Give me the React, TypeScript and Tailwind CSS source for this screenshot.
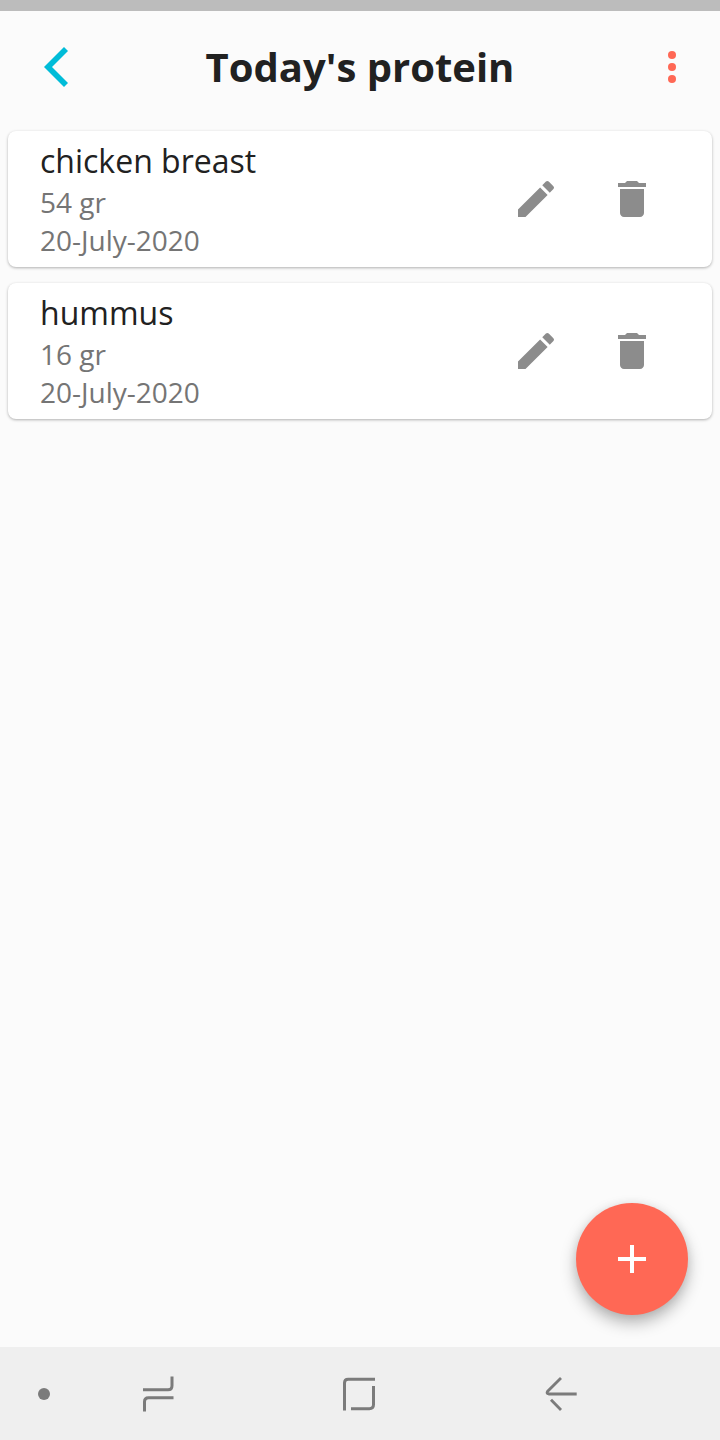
const foods = [
  { name: 'chicken breast', amount: '54 gr', date: '20-July-2020' },
  { name: 'hummus', amount: '16 gr', date: '20-July-2020' },
];

function MaterialIcon({ d, className }: { d: string; className: string }) {
  return (
    <svg viewBox="0 0 24 24" className={className} fill="currentColor">
      <path d={d} />
    </svg>
  );
}

const EDIT = 'M3 17.25V21h3.75L17.81 9.94l-3.75-3.75L3 17.25zM20.71 7.04a1 1 0 0 0 0-1.41l-2.34-2.34a1 1 0 0 0-1.41 0l-1.83 1.83 3.75 3.75 1.83-1.83z';
const TRASH = 'M6 19c0 1.1.9 2 2 2h8c1.1 0 2-.9 2-2V7H6v12zM19 4h-3.5l-1-1h-5l-1 1H5v2h14V4z';

export default function App() {
  return (
    <div className="relative flex h-[1440px] w-[720px] flex-col bg-[#fbfbfb] font-['Open_Sans',sans-serif]">
      <div className="h-[11px] bg-[#bcbcbc]" />
      <header className="flex h-28 items-center justify-between px-6">
        <button aria-label="Back" className="flex w-16 justify-center">
          <svg viewBox="0 0 24 40" className="h-10 w-6 text-[#00bcd8]" fill="currentColor">
            <path d="M20 0 0 20l20 20 4-4L8 20 24 4z" />
          </svg>
        </button>
        <h1 className="text-[40px] leading-none font-bold whitespace-nowrap text-[#212121]">Today's protein</h1>
        <button aria-label="More" className="flex w-16 justify-end">
          <svg viewBox="0 0 24 24" className="size-12 text-[#ff6855]" fill="currentColor">
            <circle cx="12" cy="6" r="2" />
            <circle cx="12" cy="12" r="2" />
            <circle cx="12" cy="18" r="2" />
          </svg>
        </button>
      </header>
      <main className="flex flex-1 flex-col gap-4 px-2 pt-2">
        {foods.map((f) => (
          <article key={f.name} className="flex h-[136px] items-center rounded-lg bg-white pr-14 pl-8 shadow-[0_1px_3px_rgba(0,0,0,0.3)]">
            <div className="flex-1 font-[370]">
              <h2 className="text-[32px] leading-[44px] font-[370] text-[#212121]">{f.name}</h2>
              <p className="text-[28px] leading-[38px] text-[#757575]">{f.amount}</p>
              <p className="text-[28px] leading-[38px] text-[#757575]">{f.date}</p>
            </div>
            <div className="flex gap-12 text-[#8c8c8c]">
              <MaterialIcon d={EDIT} className="size-12" />
              <MaterialIcon d={TRASH} className="size-12" />
            </div>
          </article>
        ))}
      </main>
      <button aria-label="Add" className="absolute top-[1203px] left-[576px] flex size-28 items-center justify-center rounded-full bg-[#ff6855] text-white shadow-[0_8px_16px_rgba(0,0,0,0.28),0_1px_10px_rgba(0,0,0,0.08)]">
        <MaterialIcon d="M19 13h-6v6h-2v-6H5v-2h6V5h2v6h6v2z" className="size-12" />
      </button>
      <nav className="h-[93px] bg-[#efefef]">
        <svg viewBox="0 1347 720 93" className="h-[93px] w-[720px]" fill="none" stroke="#7b7b7b" strokeWidth="3">
          <circle cx="44" cy="1394" r="6" fill="#7b7b7b" stroke="none" />
          <path d="M143 1389.800h25q4 0 4-4v-9.300M173.500 1397.800h-25q-4 0-4 4v9.700" />
          <path d="M344.500 1410.500v-27.500q0-3.700 3.700-3.700h26.800M373.500 1386v18.500q0 4.200-4.200 4.200h-18.300" />
          <path d="M576.700 1394h-28q-2.500-.500-1.200-2.500l13.500-13.500M551 1399.700l10 10.300" strokeWidth="2.800" />
        </svg>
      </nav>
    </div>
  );
}
